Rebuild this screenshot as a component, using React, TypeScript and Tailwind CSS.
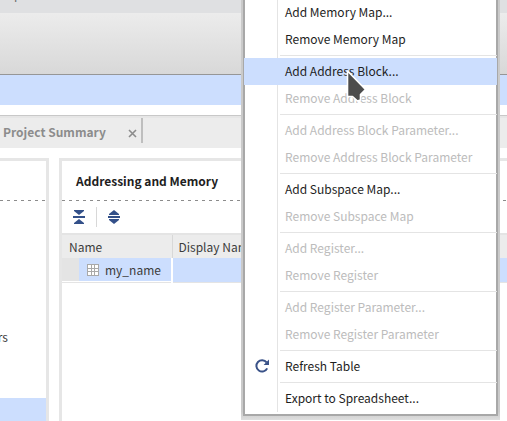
import React from "react";

type Entry = { label: string; disabled?: boolean; active?: boolean; refresh?: boolean };

const groups: Entry[][] = [
  [{ label: "Add Memory Map..." }, { label: "Remove Memory Map" }],
  [{ label: "Add Address Block...", active: true }, { label: "Remove Address Block", disabled: true }],
  [
    { label: "Add Address Block Parameter...", disabled: true },
    { label: "Remove Address Block Parameter", disabled: true },
  ],
  [{ label: "Add Subspace Map..." }, { label: "Remove Subspace Map", disabled: true }],
  [{ label: "Add Register...", disabled: true }, { label: "Remove Register", disabled: true }],
  [
    { label: "Add Register Parameter...", disabled: true },
    { label: "Remove Register Parameter", disabled: true },
  ],
  [{ label: "Refresh Table", refresh: true }],
  [{ label: "Export to Spreadsheet..." }],
];

function RefreshIcon() {
  return (
    <svg width="16" height="16" viewBox="0 0 16 16" fill="none">
      <path d="M12.6 4.4A5.7 5.7 0 1 0 13.2 10.4" stroke="#3a5288" strokeWidth="2" />
      <path d="M15 1.4V7H9.6Z" fill="#3a5288" />
    </svg>
  );
}

function MenuItem({ item }: { item: Entry }) {
  return (
    <button
      type="button"
      role="menuitem"
      disabled={item.disabled}
      className={`flex h-[27px] w-full items-center pb-[2px] text-left ${
        item.active ? "bg-[#ccdefe]" : ""
      } ${item.disabled ? "text-[#bcbcbc]" : "text-[#1e1e1e]"}`}
    >
      <span className="flex w-[41px] shrink-0 pl-[10px]">{item.refresh && <RefreshIcon />}</span>
      {item.label}
    </button>
  );
}

function ContextMenu() {
  return (
    <div className="absolute -top-[4px] left-[241px] w-[259px] bg-linear-to-b from-[#cacaca] from-98% to-[#dedede] px-[2px] pb-[4px]">
      <div
        role="menu"
        className="relative border-2 border-t-0 border-[#a8a8a8] bg-white pt-[3px] pb-[2px] whitespace-nowrap"
      >
        <div className="absolute top-0 bottom-[2px] left-[32px] w-px bg-[#e4e4e4]" />
        <div className="relative -mx-px">
          {groups.map((group, i) => (
            <React.Fragment key={i}>
              {i > 0 && (
                <div role="separator" className="flex h-[5px] items-center pl-[36px]">
                  <div className="h-px flex-1 bg-[#e4e4e4]" />
                </div>
              )}
              {group.map((item) => (
                <MenuItem key={item.label} item={item} />
              ))}
            </React.Fragment>
          ))}
        </div>
      </div>
    </div>
  );
}

function Cursor() {
  return (
    <svg className="pointer-events-none absolute top-[68px] left-[345px]" width="24" height="36" viewBox="0 0 24 36">
      <path
        d="M2.5 3V28.5H7.5L12.5 33L15.5 32V26.5L20.5 21.5Z"
        fill="#4c4c4c"
        stroke="#ffffff"
        strokeWidth="1.6"
        strokeLinejoin="round"
      />
    </svg>
  );
}

function DashedRule() {
  return (
    <svg className="block w-full" height="1">
      <line x1="0" y1="0.5" x2="100%" y2="0.5" stroke="#8c8c8c" strokeDasharray="3 4" />
    </svg>
  );
}

function GridIcon() {
  return (
    <svg width="12" height="12" viewBox="0 0 12 12" shapeRendering="crispEdges">
      <rect width="12" height="12" fill="#fff" />
      <path d="M0.5 0V12M4.5 0V12M7.5 0V12M11.5 0V12M0 0.5H12M0 4.5H12M0 7.5H12M0 11.5H12" stroke="#a9a9a9" />
    </svg>
  );
}

export default function App() {
  return (
    <div className="relative h-screen overflow-hidden bg-white font-['Noto_Sans_CJK_SC','Noto_Sans',sans-serif] text-[12px] leading-[20px] text-[#3c3c3c]">
      <div className="flex h-screen flex-col">
        <header className="shrink-0">
          <div className="flex h-[13px] items-end overflow-hidden bg-[#dfe0e2] pb-[9px] pl-[14px] text-[#6c6c6c]">p</div>
          <div className="h-[62px] border-b border-[#969696] bg-linear-to-b from-[#ececec] to-[#d8d8d8]" />
          <div className="h-[30px] bg-[#ccdefe]" />
        </header>

        <nav className="mt-[10px] flex h-[33px] shrink-0 items-start border-t border-[#c8c8c8] bg-[#ececec]">
          <div className="flex w-full border-t-2 border-[#e6e6e6]">
            <div className="flex h-[25px] items-center gap-[22px] border-r-2 border-[#bebebe] pr-[4px] pl-[3px]">
              <a href="#summary" className="pt-[2px] font-bold text-[#8c8c8c]">
                Project Summary
              </a>
              <button type="button" aria-label="Close tab" className="pt-[6px]">
                <svg width="9" height="9" viewBox="0 0 9 9" stroke="#8c8c8c" strokeWidth="1.6">
                  <path d="M1 1L8 8M8 1L1 8" />
                </svg>
              </button>
            </div>
          </div>
        </nav>

        <main className="mt-[10px] flex min-h-0 flex-1 gap-[10px]">
          <aside className="flex w-[49px] shrink-0 flex-col border-t-[3px] border-r-[3px] border-[#e6e6e6]">
            <div className="h-[39px]" />
            <DashedRule />
            <div className="mt-[126px] flex w-[8px] justify-end overflow-hidden">rs</div>
            <div className="mt-[51px] flex-1 bg-[#ccdefe]" />
          </aside>

          <section className="min-w-0 flex-1 border-t-[3px] border-l-[3px] border-[#e6e6e6]">
            <h2 className="flex h-[39px] items-center pl-[14px] font-bold text-[#1e1e1e]">Addressing and Memory</h2>
            <DashedRule />
            <div className="flex h-[32px] items-center pl-[11px]">
              <button type="button" aria-label="Collapse all">
                <svg width="12" height="14" viewBox="0 0 12 14" fill="#335089">
                  <path d="M1 0H11V1L6 5L1 1ZM0 6H12V8H0ZM6 9L11 13V14H1V13Z" />
                </svg>
              </button>
              <span className="mx-[11px] h-[20px] w-px bg-[#d8d8d8]" />
              <button type="button" aria-label="Expand all">
                <svg width="12" height="14" viewBox="0 0 12 14" fill="#335089">
                  <path d="M6 0L11 4V5H1V4ZM0 6H12V8H0ZM1 9H11V10L6 14L1 10Z" />
                </svg>
              </button>
            </div>
            <table className="w-full table-fixed border-collapse border-t-2 border-[#e4e4e4]">
              <thead>
                <tr className="h-[24px] bg-[#ececec] text-left">
                  <th className="w-[110px] border-r border-[#d8d8d8] p-0 pl-[7px] font-normal">Name</th>
                  <th className="p-0 pl-[6px] font-normal">Display Name</th>
                </tr>
              </thead>
              <tbody>
                <tr className="h-[24px] border-b border-[#e4e4e4]">
                  <td className="border-r-2 border-white p-0">
                    <div className="flex h-[23px] items-center gap-[6px] border-l-[17px] border-[#e4e4e4] bg-[#ccdefe] pl-[8px]">
                      <GridIcon />
                      my_name
                    </div>
                  </td>
                  <td className="bg-[#ccdefe] p-0" />
                </tr>
              </tbody>
            </table>
          </section>
        </main>
      </div>
      <ContextMenu />
      <Cursor />
    </div>
  );
}
